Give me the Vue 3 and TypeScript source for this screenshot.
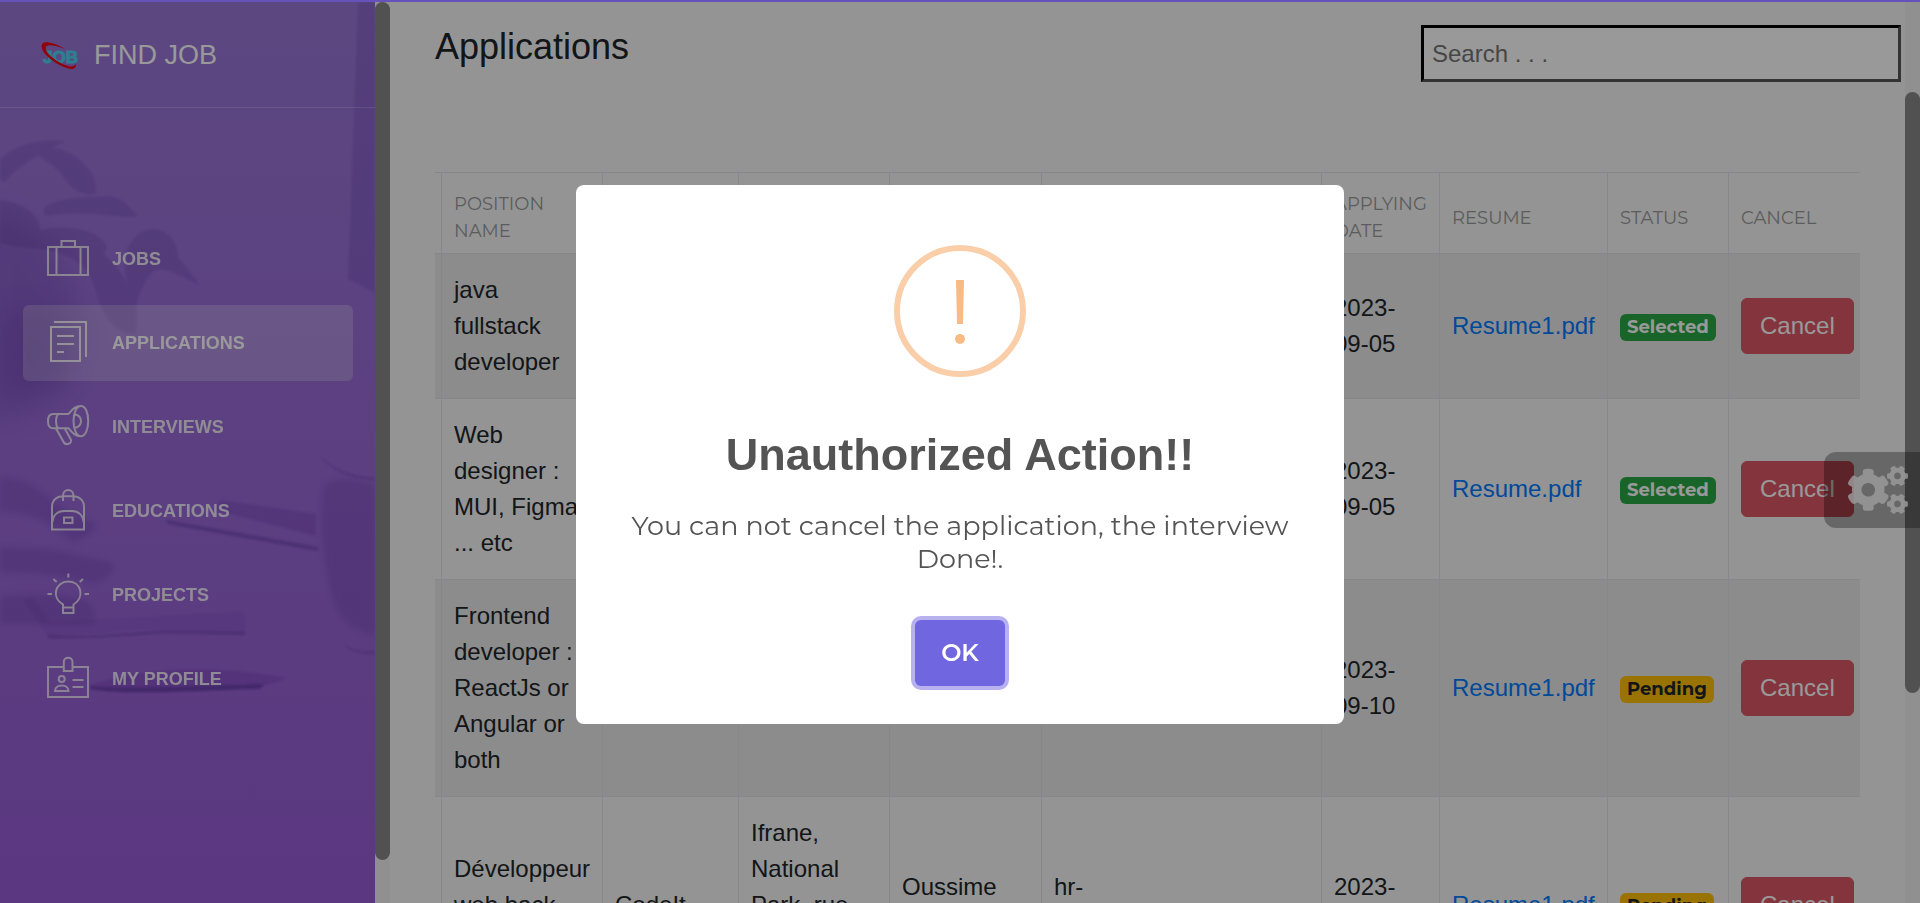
<script setup lang="ts">
import { ref } from 'vue'

interface NavItem {
  label: string
  active?: boolean
  icon: string
}

interface Application {
  position: string
  company: string
  address: string
  recruiter: string
  email: string
  date: string
  resume: string
  status: 'Selected' | 'Pending'
}

const navItems: NavItem[] = [
  {
    label: 'Jobs',
    icon: 'M4 12H44V40H4ZM12.5 12V40M36.5 12V40M17.5 12V6H31V12',
  },
  {
    label: 'Applications',
    active: true,
    icon: 'M7 8H36V42H7ZM10 3H42V38M13 17H30M13 25H30M13 33H20',
  },
  {
    label: 'Interviews',
    icon: 'M29.5 18C29.5 9.4 32.7 3 37 3S44.2 9.4 44.2 18 41.2 33.2 37 33.2 29.5 26.6 29.5 18ZM37 3C31 3 28 7 24.5 11H9C5.5 11 4 14 4 18S5.5 25.3 9 25.3H24.5C28 29.5 31 33.2 37 33.2M14 11C12.5 13 12 15.5 12 18S12.5 23.5 14 25.3M30.5 11.5C34.5 11.5 37 14.5 37 18S34.5 24.8 30.5 24.8M12 25.5L19.3 38.5C21.6 43.3 28.6 40.5 26.8 36.5L20.8 25.5',
  },
  {
    label: 'Educations',
    icon: 'M8 42.5V20C8 13 13 9.3 19 9.3H29C35 9.3 40 13 40 20V42.5ZM19 14V9C19 1 29.5 1 29.5 9V14M8 36C9 28 14 24 20 24H28C34 24 39 28 40 36M20 30.5H28.5V36H20Z',
  },
  {
    label: 'Projects',
    icon: 'M19 42V33.5C7 27 11 10.5 24.3 10.5S41 27 29.5 33.5V42ZM19 36.5H29.5M24.3 2.5V6.5M3.5 23H8M40.5 23H45M9.3 8L12.7 11M39 8L35.7 11',
  },
  {
    label: 'My Profile',
    icon: 'M19.8 12H4V42H44V12H28.5M19.8 16V7C19.8 1.4 28.5 1.4 28.5 7V16ZM14.7 24A3 3 0 1 0 20.7 24A3 3 0 1 0 14.7 24M11 36C11 28.5 24.5 28.5 24.5 36ZM28.5 25H39.5M28.5 32H39.5',
  },
]

const headings: string[] = ['', 'Position name', '', '', '', '', 'Applying date', 'Resume', 'Status', 'Cancel']

const applications: Application[] = [
  {
    position: 'java fullstack developer',
    company: '', address: '', recruiter: '', email: '',
    date: '2023-09-05', resume: 'Resume1.pdf', status: 'Selected',
  },
  {
    position: 'Web designer : MUI, Figma ... etc',
    company: '', address: '', recruiter: '', email: '',
    date: '2023-09-05', resume: 'Resume.pdf', status: 'Selected',
  },
  {
    position: 'Frontend developer : ReactJs or Angular or both',
    company: '', address: '', recruiter: '', email: '',
    date: '2023-09-10', resume: 'Resume1.pdf', status: 'Pending',
  },
  {
    position: 'Développeur web back-end junior',
    company: 'CodeIt',
    address: 'Ifrane, National Park, rue Hassan Ifrane',
    recruiter: 'Oussime Omar',
    email: 'hr-contact@codeitlab.com',
    date: '2023-09-10', resume: 'Resume1.pdf', status: 'Pending',
  },
]

const search = ref('')
const dialogOpen = ref(true)
</script>

<template>
  <div class="page">
    <aside class="sidebar">
      <svg class="backdrop" viewBox="0 0 375 901" preserveAspectRatio="xMidYMid slice" aria-hidden="true">
        <defs>
          <filter id="soft" x="-20%" y="-20%" width="140%" height="140%">
            <feGaussianBlur stdDeviation="3" />
          </filter>
          <filter id="soft-wide" x="-50%" y="-50%" width="200%" height="200%">
            <feGaussianBlur stdDeviation="14" />
          </filter>
          <filter id="edge">
            <feGaussianBlur stdDeviation="1" />
          </filter>
        </defs>
        <g fill="#3f1f86">
          <path d="M-20 210C20 210 60 240 80 300C90 370 60 410-20 420Z" opacity=".17" filter="url(#soft-wide)" />
          <path d="M0 310C40 300 70 310 72 350C74 385 50 395 0 390Z" opacity=".14" filter="url(#soft-wide)" />
          <g filter="url(#edge)" opacity=".15">
            <path d="M0 158C15 140 50 136 65 140C50 146 15 165 4 181L0 176Z" />
            <path d="M30 147C60 138 98 160 96 192C84 194 74 190 66 178C58 165 44 158 30 147Z" />
            <path d="M44 206C60 194 90 196 108 194C124 195 128 205 138 214C120 218 90 206 44 214Z" />
            <path d="M0 198C20 200 40 212 40 228C60 224 90 224 104 240C112 246 96 270 80 262C50 240 20 250 0 240Z" />
            <path d="M124 260C128 234 145 224 160 228C175 234 178 248 178 256C186 264 192 274 200 283C180 276 168 262 152 270C144 280 140 290 136 304H118C130 290 126 275 124 260Z" />
            <path d="M50 246C80 250 90 270 96 290S110 330 136 332V304C128 276 112 254 92 246Z" />
            <path d="M358 0H375V291L348 277Z" />
          </g>
          <g filter="url(#soft)" opacity=".16">
            <path d="M0 475C18 476 34 481 48 495C68 512 84 516 96 522C94 532 84 536 72 540C52 518 20 508 0 510Z" />
            <path d="M0 545C20 548 50 544 72 552C92 556 104 558 114 562C114 570 108 576 94 582C66 574 30 570 0 570Z" />
            <path d="M0 594C30 592 66 592 84 598C98 604 96 618 92 622H0Z" />
            <path d="M324 482C340 474 360 476 375 484V634C352 628 340 618 334 602C324 570 318 520 324 482Z" />
          </g>
          <g filter="url(#edge)">
            <path d="M220 498L316 512V534L216 508Z" opacity=".14" />
            <path d="M166 518L318 545V549L168 522Z" opacity=".3" />
            <path d="M24 598L48 634L140 628L190 629L245 630V611L240 610L50 620L32 596Z" opacity=".08" />
            <path d="M48 633C100 636 130 630 165 629L245 630V633L165 631C120 634 90 637 48 636Z" opacity=".3" />
            <path d="M90 683C140 668 200 660 286 676C270 684 250 688 180 689C140 690 110 690 90 687Z" opacity=".14" />
            <path d="M90 685C150 687 220 683 264 682L260 687C200 688 130 694 90 687Z" opacity=".4" />
            <path d="M343 641C352 649 364 650 375 649V652C360 652 350 650 343 641Z" opacity=".2" />
            <path d="M318 452C334 468 350 474 375 476V478C350 476 332 470 318 452Z" opacity=".2" />
          </g>
        </g>
      </svg>
      <header class="brand">
        <svg class="brand-logo" viewBox="0 -2 38 30" role="img" aria-label="Job">
          <text class="brand-mark" x="2" y="21">JOB</text>
          <path d="M24 7C16 2 5-1 2 1C-1 4 1 9 6 14C13 21 23 26 30 27C34 27 35 25 35 22C33 25 29 25 24 23C16 20 7 13 5 8C3 3 8 1 24 7Z" fill="#f5000f" />
        </svg>
        <a class="brand-name" href="#">FIND JOB</a>
      </header>
      <nav class="nav">
        <a v-for="item in navItems" :key="item.label" href="#" class="nav-link" :class="{ active: item.active }">
          <svg class="nav-icon" viewBox="0 0 48 48" aria-hidden="true"><path :d="item.icon" /></svg>
          <span>{{ item.label }}</span>
        </a>
      </nav>
    </aside>
    <div class="scrollbar scrollbar-left"><div class="thumb"></div></div>

    <main class="content">
      <header class="toolbar">
        <h1>Applications</h1>
        <input v-model="search" class="search" type="text" placeholder="Search . . ." aria-label="Search" />
      </header>
      <table class="applications">
        <colgroup>
          <col class="c-index" /><col class="c-position" /><col class="c-company" /><col class="c-address" />
          <col class="c-recruiter" /><col class="c-email" /><col class="c-date" /><col class="c-resume" />
          <col class="c-status" /><col class="c-cancel" />
        </colgroup>
        <thead>
          <tr><th v-for="(heading, i) in headings" :key="i" scope="col">{{ heading }}</th></tr>
        </thead>
        <tbody>
          <tr v-for="(row, i) in applications" :key="i">
            <td></td>
            <td>{{ row.position }}</td>
            <td>{{ row.company }}</td>
            <td>{{ row.address }}</td>
            <td>{{ row.recruiter }}</td>
            <td>{{ row.email }}</td>
            <td>{{ row.date }}</td>
            <td><a class="resume" href="#">{{ row.resume }}</a></td>
            <td><span class="badge" :class="row.status.toLowerCase()">{{ row.status }}</span></td>
            <td><button type="button" class="cancel">Cancel</button></td>
          </tr>
        </tbody>
      </table>
    </main>
    <div class="scrollbar scrollbar-right"><div class="thumb"></div></div>

    <button type="button" class="settings" aria-label="Settings">
      <svg viewBox="0 0 640 512" aria-hidden="true">
        <path d="M512.1 191l-8.2 14.3c-3 5.3-9.4 7.5-15.1 5.4-11.8-4.4-22.6-10.7-32.1-18.6-4.6-3.8-5.8-10.5-2.8-15.7l8.2-14.3c-6.9-8-12.3-17.3-15.9-27.4h-16.5c-6 0-11.2-4.3-12.2-10.3-2-12-2.1-24.6 0-37.1 1-6 6.2-10.4 12.2-10.4h16.5c3.6-10.1 9-19.4 15.9-27.4l-8.2-14.3c-3-5.2-1.9-11.9 2.8-15.7 9.5-7.9 20.4-14.2 32.1-18.6 5.7-2.1 12.1.1 15.1 5.4l8.2 14.3c10.5-1.9 21.2-1.9 31.7 0L552 6.3c3-5.3 9.4-7.5 15.1-5.4 11.8 4.4 22.6 10.7 32.1 18.6 4.6 3.8 5.8 10.5 2.8 15.7l-8.2 14.3c6.9 8 12.3 17.3 15.9 27.4h16.5c6 0 11.2 4.3 12.2 10.3 2 12 2.1 24.6 0 37.1-1 6-6.2 10.4-12.2 10.4h-16.5c-3.6 10.1-9 19.4-15.9 27.4l8.2 14.3c3 5.2 1.9 11.9-2.8 15.7-9.5 7.9-20.4 14.2-32.1 18.6-5.7 2.1-12.1-.1-15.1-5.4l-8.2-14.3c-10.4 1.9-21.2 1.9-31.7 0zm-10.5-58.8c38.5 29.6 82.4-14.3 52.8-52.8-38.5-29.7-82.4 14.3-52.8 52.8zM386.3 286.1l33.7 16.8c10.1 5.8 14.5 18.1 10.5 29.1-8.9 24.2-26.4 46.4-42.6 65.8-7.4 8.9-20.2 11.1-30.3 5.3l-29.1-16.8c-16 13.7-34.6 24.6-54.9 31.7v33.6c0 11.6-8.3 21.6-19.7 23.6-24.6 4.2-50.4 4.4-75.9 0-11.5-2-20-11.9-20-23.6V418c-20.3-7.2-38.9-18-54.9-31.7L74 403c-10 5.8-22.9 3.6-30.3-5.3-16.2-19.4-33.3-41.6-42.2-65.7-4-10.9.4-23.2 10.5-29.1l33.3-16.8c-3.9-20.9-3.9-42.4 0-63.4L12 205.8c-10.1-5.8-14.6-18.1-10.5-29 8.9-24.2 26-46.4 42.2-65.8 7.4-8.9 20.2-11.1 30.3-5.3l29.1 16.8c16-13.7 34.6-24.6 54.9-31.7V57.1c0-11.5 8.2-21.5 19.6-23.5 24.6-4.2 50.5-4.4 76-.1 11.5 2 20 11.9 20 23.6v33.6c20.3 7.2 38.9 18 54.9 31.7l29.1-16.8c10-5.8 22.9-3.6 30.3 5.3 16.2 19.4 33.2 41.6 42.1 65.8 4 10.9.1 23.2-10 29.1l-33.7 16.8c3.9 21 3.9 42.5 0 63.5zm-117.6 21.1c59.2-77-28.7-164.9-105.7-105.7-59.2 77 28.7 164.9 105.7 105.7zm243.4 182.7l-8.2 14.3c-3 5.3-9.4 7.5-15.1 5.4-11.8-4.4-22.6-10.7-32.1-18.6-4.6-3.8-5.8-10.5-2.8-15.7l8.2-14.3c-6.9-8-12.3-17.3-15.9-27.4h-16.5c-6 0-11.2-4.3-12.2-10.3-2-12-2.1-24.6 0-37.1 1-6 6.2-10.4 12.2-10.4h16.5c3.6-10.1 9-19.4 15.9-27.4l-8.2-14.3c-3-5.2-1.9-11.9 2.8-15.7 9.5-7.9 20.4-14.2 32.1-18.6 5.7-2.1 12.1.1 15.1 5.4l8.2 14.3c10.5-1.9 21.2-1.9 31.7 0l8.2-14.3c3-5.3 9.4-7.5 15.1-5.4 11.8 4.4 22.6 10.7 32.1 18.6 4.6 3.8 5.8 10.5 2.8 15.7l-8.2 14.3c6.9 8 12.3 17.3 15.9 27.4h16.5c6 0 11.2 4.3 12.2 10.3 2 12 2.1 24.6 0 37.1-1 6-6.2 10.4-12.2 10.4h-16.5c-3.6 10.1-9 19.4-15.9 27.4l8.2 14.3c3 5.2 1.9 11.9-2.8 15.7-9.5 7.9-20.4 14.2-32.1 18.6-5.7 2.1-12.1-.1-15.1-5.4l-8.2-14.3c-10.4 1.9-21.2 1.9-31.7 0zM501.6 431c38.5 29.6 82.4-14.3 52.8-52.8-38.5-29.6-82.4 14.3-52.8 52.8z" />
      </svg>
    </button>

    <div v-if="dialogOpen" class="overlay">
      <section class="dialog" role="alertdialog" aria-modal="true" aria-labelledby="dialog-title" aria-describedby="dialog-text">
        <svg class="dialog-icon" viewBox="0 0 132 132" aria-hidden="true">
          <circle cx="66" cy="66" r="63" fill="none" stroke="#facea8" stroke-width="6" />
          <path d="M62 35H70L69 79H63Z" fill="#f8bb86" />
          <circle cx="66" cy="94" r="5" fill="#f8bb86" />
        </svg>
        <h2 id="dialog-title">Unauthorized Action!!</h2>
        <p id="dialog-text">You can not cancel the application, the interview Done!.</p>
        <button type="button" class="confirm" @click="dialogOpen = false">OK</button>
      </section>
    </div>
    <div class="progress"></div>
  </div>
</template>

<style>
body {
  margin: 0;
}
</style>

<style scoped>
.page {
  display: flex;
  box-sizing: border-box;
  height: 100vh;
  padding-top: 2px;
  overflow: hidden;
  position: relative;
  background: #f7f7f8;
  color: #212529;
  font: 24px/36px "Liberation Sans", Arial, sans-serif;
}

.progress {
  position: absolute;
  inset: 0 0 auto;
  height: 2px;
  background: #6553b9;
}

/* Sidebar */
.sidebar {
  position: relative;
  flex: 0 0 375px;
  overflow: hidden;
  background: linear-gradient(#9a78d8, #996dd8 40%, #985cd7);
}

.backdrop {
  position: absolute;
  inset: 0;
  width: 100%;
  height: 100%;
}

.brand {
  position: relative;
  display: flex;
  align-items: center;
  gap: 15px;
  height: 105px;
  padding-left: 41px;
  border-bottom: 1px solid rgba(255, 255, 255, 0.2);
}

.brand-logo {
  width: 38px;
  height: 30px;
}

.brand-mark {
  font-size: 17px;
  font-weight: 700;
  fill: #4bd4f0;
  stroke: #4bd4f0;
}

.brand-name {
  color: #fff;
  font-size: 27px;
  text-decoration: none;
}

.nav {
  position: relative;
  display: flex;
  flex-direction: column;
  gap: 8px;
  padding: 113px 22px 0 23px;
}

.nav-link {
  display: flex;
  align-items: center;
  gap: 20px;
  height: 76px;
  padding-left: 21px;
  border-radius: 6px;
  color: #fff;
  font-size: 18px;
  font-weight: 700;
  text-transform: uppercase;
  text-decoration: none;
}

.nav-link > * {
  opacity: 0.86;
}

.nav-link.active {
  background: rgba(255, 255, 255, 0.23);
}

.nav-link.active > * {
  opacity: 1;
}

.nav-icon {
  width: 48px;
  height: 48px;
  fill: none;
  stroke: #fff;
  stroke-width: 2;
  stroke-opacity: 0.9;
}

/* Scrollbars */
.scrollbar {
  display: grid;
  flex: 0 0 15px;
  background: #f1f1f1;
}

.scrollbar-left {
  grid-template-rows: 858fr 43fr;
}

.scrollbar-right {
  grid-template-rows: 90fr 601fr 210fr;
}

.scrollbar-right .thumb {
  grid-row: 2;
}

.thumb {
  border-radius: 8px;
  background: #888;
}

/* Content */
.content {
  flex: 1;
  min-width: 0;
}

.toolbar {
  display: flex;
  justify-content: space-between;
  padding: 23px 4px 90px 45px;
}

h1 {
  margin: 2px 0 0;
  font-size: 36px;
  font-weight: 400;
  line-height: 40px;
}

.search {
  box-sizing: border-box;
  width: 480px;
  height: 57px;
  padding: 0 8px;
  border: 3px solid;
  border-color: #000 #555 #555 #000;
  background: #fff;
  font: inherit;
}

.search::placeholder {
  color: #757575;
  opacity: 1;
}

.applications {
  width: calc(100% - 90px);
  margin: 0 45px;
  border-collapse: separate;
  border-spacing: 0;
  table-layout: fixed;
}

.c-index { width: 6px; }
.c-position { width: 161px; }
.c-company { width: 136px; }
.c-address { width: 151px; }
.c-recruiter { width: 152px; }
.c-date { width: 118px; }
.c-resume { width: 168px; }
.c-status { width: 121px; }
.c-cancel { width: 132px; }

th,
td {
  border-top: 1px solid #dee2e6;
  border-left: 1px solid #dee2e6;
  text-align: left;
  vertical-align: middle;
}

th {
  padding: 18px 0 8px 12px;
  color: #9a9a9a;
  font: 18px/27px Montserrat, Inter, sans-serif;
  text-transform: uppercase;
}

td {
  padding: 18px 11px 18px 12px;
  line-height: 36px;
}

th:first-child,
td:first-child {
  padding: 0;
  border-left: 0;
}

tbody tr:nth-child(odd) {
  background: rgba(0, 0, 0, 0.05);
}

td:last-child {
  padding: 0 0 0 12px;
}

.resume {
  color: #007bff;
  text-decoration: none;
}

.badge {
  display: inline-block;
  padding: 0 7px;
  border-radius: 6px;
  font: 700 18px/27px Montserrat, Inter, sans-serif;
  vertical-align: middle;
}

.selected {
  background: #28a745;
  color: #fff;
}

.pending {
  background: #ffc107;
  color: #212529;
}

.cancel {
  display: block;
  padding: 9px 18px;
  border: 1px solid #dc5764;
  border-radius: 6px;
  background: #dc5764;
  color: #fff;
  font: inherit;
}

.settings {
  position: absolute;
  right: 0;
  top: 50%;
  display: flex;
  align-items: center;
  width: 96px;
  height: 76px;
  padding: 0 0 0 24px;
  border: 0;
  border-radius: 12px 0 0 12px;
  background: rgba(0, 0, 0, 0.3);
}

.settings svg {
  width: 60px;
  height: 48px;
  fill: #fff;
  fill-opacity: 0.85;
}

/* Alert */
.overlay {
  position: absolute;
  inset: 0;
  display: flex;
  align-items: center;
  justify-content: center;
  padding-top: 6px;
  background: rgba(0, 0, 0, 0.4);
}

.dialog {
  display: flex;
  flex-direction: column;
  align-items: center;
  box-sizing: border-box;
  width: 768px;
  max-width: 100%;
  padding: 60px 43px 38px;
  border-radius: 8px;
  background: #fff;
  color: #545454;
  text-align: center;
}

.dialog-icon {
  width: 132px;
  height: 132px;
}

h2 {
  margin: 51px 0 27px;
  font-size: 45px;
  line-height: 54px;
}

p {
  margin: 0 0 45px;
  font: 400 27px/33px Montserrat, Inter, sans-serif;
}

.confirm {
  width: 90px;
  height: 66px;
  border: 0;
  border-radius: 6px;
  background: #7066e0;
  box-shadow: 0 0 0 4px rgba(112, 102, 224, 0.5);
  color: #fff;
  font: 600 24px/36px Montserrat, Inter, sans-serif;
}
</style>
